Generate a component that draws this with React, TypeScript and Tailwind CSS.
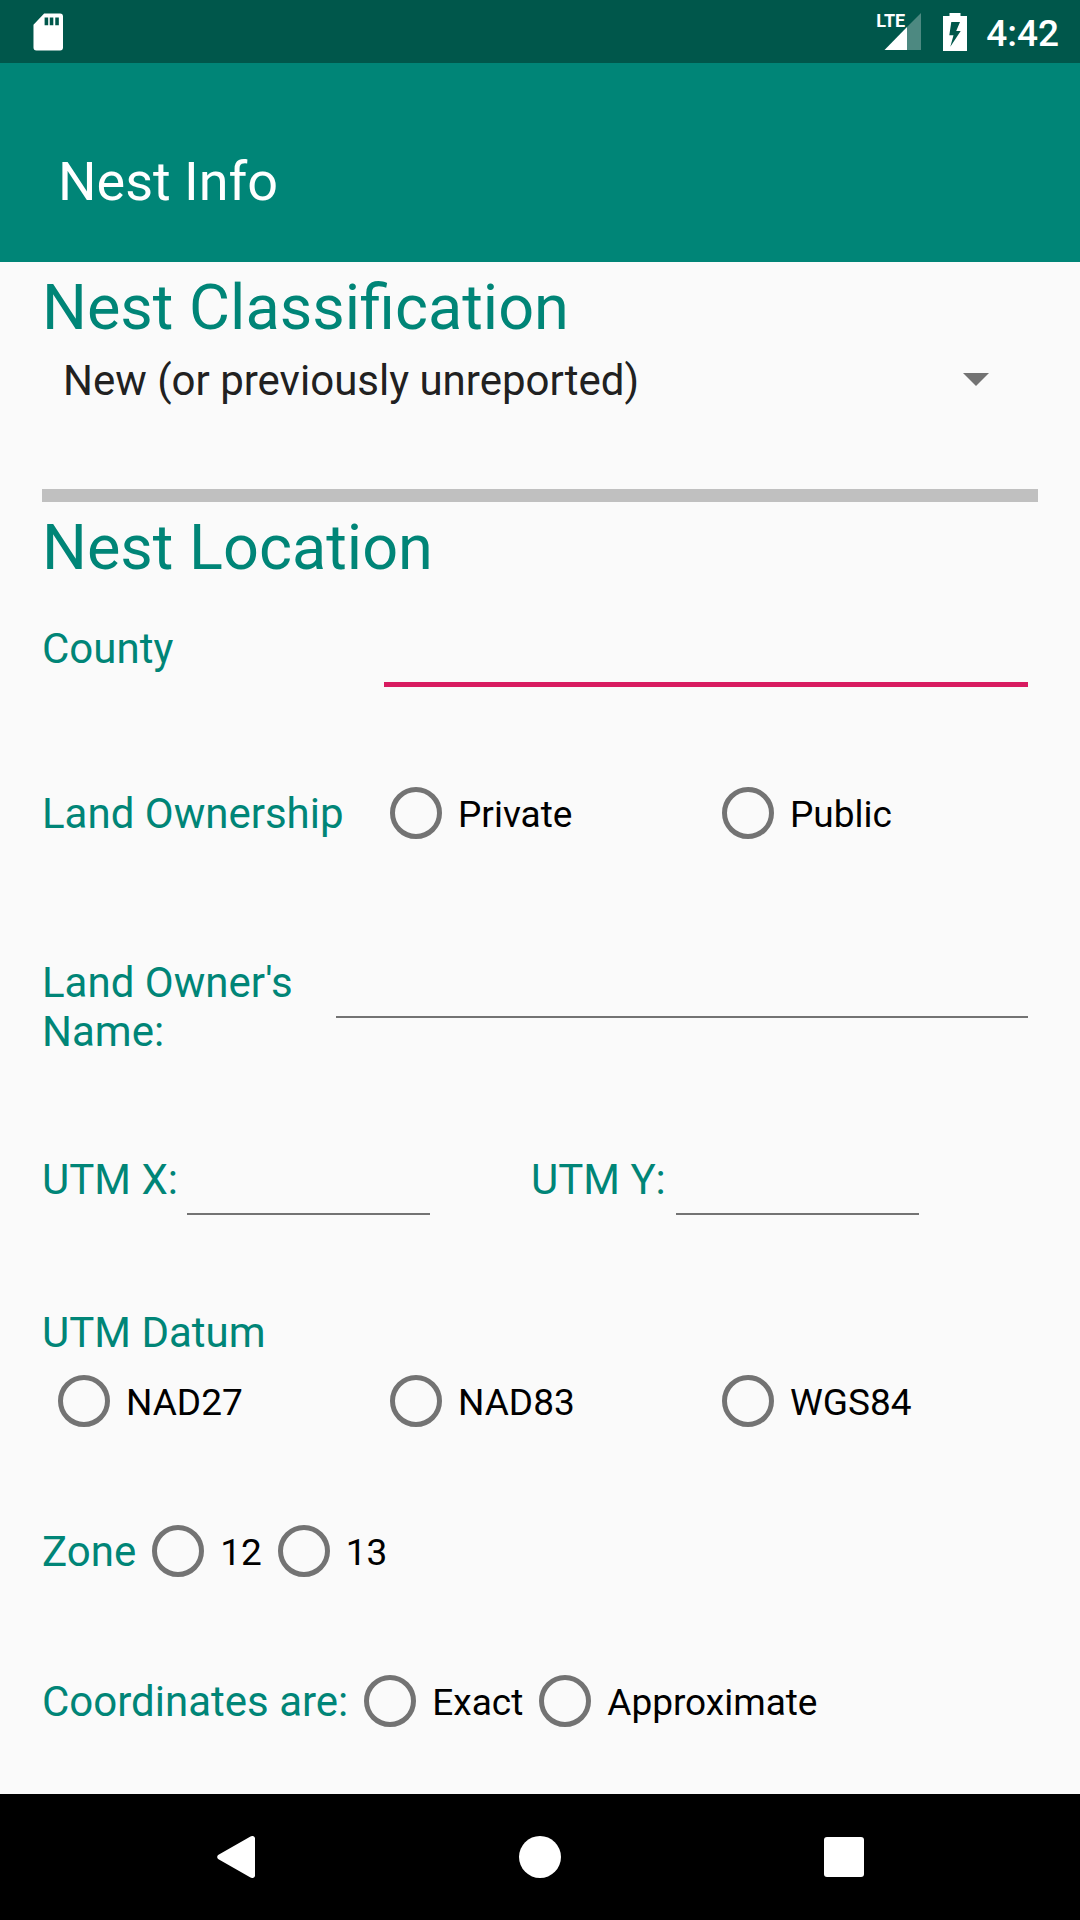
import React from 'react';

function Radio({ name, label, className = '' }: { name: string; label: string; className?: string }) {
  return (
    <label className={`flex items-center text-[37px] leading-[44px] text-black ${className}`}>
      <input
        type="radio"
        name={name}
        className="mx-4 h-[52px] w-[52px] shrink-0 appearance-none rounded-full border-[5px] border-[#737373] checked:bg-[#d81b60]"
      />
      <span className="pt-1">{label}</span>
    </label>
  );
}

const label = 'text-[42px] leading-[49px] text-[#008577]';
const heading = 'mt-[9px] text-[63px] leading-[74px] text-[#008577]';
const field = 'min-w-0 bg-transparent text-[42px] outline-none';
const line = 'h-[60px] border-b-2 border-[#737373]';

export default function App() {
  return (
    <div className="flex min-h-screen flex-col bg-[#fafafa] font-[Roboto,sans-serif]">
      <div className="flex h-[63px] items-center bg-[#00574b] px-[21px] text-white">
        <svg className="ml-3 h-[38px] w-[30px]" viewBox="0 0 31 38" fill="currentColor" aria-hidden="true">
          <path fillRule="evenodd" d="M11.5 0H28a3 3 0 0 1 3 3V35a3 3 0 0 1-3 3H3.500a3 3 0 0 1-3-3V11.500ZM12 4V12H15.700V4ZM17.300 4V12H21V4ZM23 4V12H26.700V4Z" />
        </svg>
        <div className="relative ml-auto">
          <svg className="h-[37px] w-[45px]" viewBox="0 0 45 37" aria-hidden="true">
            <path fill="#fff" fillOpacity=".3" d="M45 0V37H31V14Z" />
            <path fill="#fff" d="M31 14V37H8.500Z" />
          </svg>
          <span className="absolute left-0 top-0 text-[18px] font-bold leading-4">LTE</span>
        </div>
        <svg className="ml-[22px] h-[38px] w-[24px]" viewBox="0 0 24 38" fill="currentColor" aria-hidden="true">
          <path fillRule="evenodd" d="M6.500 0H17.500V3H24V38H0V3H6.500ZM8.300 9L6.300 22.300H10.500L7.300 33.700L17.700 18H13.200L17 9Z" />
        </svg>
        <span className="ml-[19px] pt-1 text-[37px] font-medium leading-[44px]">4:42</span>
      </div>
      <header className="flex h-[199px] items-center bg-[#008577] px-[58px] pt-[38px] text-white">
        <h1 className="text-[54px] leading-[62px]">Nest Info</h1>
      </header>
      <main className="flex flex-1 flex-col px-[42px]">
        <h2 className={heading}>Nest Classification</h2>
        <div className="relative mt-1 h-[63px]">
          <select aria-label="Nest Classification" className="h-full w-full appearance-none bg-transparent px-[21px] text-[42px] text-[#212121] outline-none">
            <option>New (or previously unreported)</option>
          </select>
          <svg className="pointer-events-none absolute right-[49px] top-6 h-[13px] w-[26px]" viewBox="0 0 26 13" aria-hidden="true">
            <path fill="#737373" d="M0 0H26L13 13Z" />
          </svg>
        </div>
        <hr className="mt-[77px] h-[13px] border-0 bg-[#c0c0c0]" />
        <h2 className={heading}>Nest Location</h2>
        <div className="mt-7 flex h-[74px] items-start">
          <label htmlFor="county" className={`w-[342px] pt-[11px] ${label}`}>County</label>
          <input id="county" className={`mr-[10px] h-full flex-1 border-b-[5px] border-[#d81b60] ${field}`} />
        </div>
        <div role="radiogroup" aria-labelledby="ownership" className="mt-[84px] flex h-[84px] items-center">
          <span id="ownership" className={`w-[332px] ${label}`}>Land Ownership</span>
          <Radio name="ownership" label="Private" className="w-[332px]" />
          <Radio name="ownership" label="Public" />
        </div>
        <div className="mt-[103px] flex">
          <label htmlFor="owner" className={`w-[294px] ${label}`}>Land Owner's Name:</label>
          <input id="owner" className={`mr-[10px] flex-1 ${line} ${field}`} />
        </div>
        <div className="mt-[99px] grid grid-cols-[489px_1fr]">
          <div className="flex">
            <label htmlFor="utm-x" className={`w-[145px] ${label}`}>UTM X:</label>
            <input id="utm-x" className={`w-[243px] ${line} ${field}`} />
          </div>
          <div className="flex">
            <label htmlFor="utm-y" className={`w-[145px] ${label}`}>UTM Y:</label>
            <input id="utm-y" className={`w-[243px] ${line} ${field}`} />
          </div>
        </div>
        <div role="radiogroup" aria-labelledby="datum" className="mt-[93px]">
          <div id="datum" className={label}>UTM Datum</div>
          <div className="mt-0.5 flex h-[84px] items-center">
            <Radio name="datum" label="NAD27" className="w-[332px]" />
            <Radio name="datum" label="NAD83" className="w-[332px]" />
            <Radio name="datum" label="WGS84" />
          </div>
        </div>
        <div role="radiogroup" aria-labelledby="zone" className="mt-[66px] flex h-[84px] items-center">
          <span id="zone" className={label}>Zone</span>
          <Radio name="zone" label="12" />
          <Radio name="zone" label="13" />
        </div>
        <div role="radiogroup" aria-labelledby="coordinates" className="mt-[66px] flex h-[84px] items-center">
          <span id="coordinates" className={label}>Coordinates are:</span>
          <Radio name="coordinates" label="Exact" />
          <Radio name="coordinates" label="Approximate" />
        </div>
      </main>
      <nav className="flex h-[126px] bg-black px-[84px] text-white">
        <button aria-label="Back" className="flex flex-1 items-center justify-center">
          <svg className="h-[42px] w-[38px]" viewBox="0 0 38 42" fill="currentColor">
            <path d="M33.500 .5C35.500-.7 38 .3 38 2.500V39.500C38 41.700 35.500 42.700 33.500 41.500L1.500 23.200C-.3 22 -.3 20 1.500 18.800Z" />
          </svg>
        </button>
        <button aria-label="Home" className="flex flex-1 items-center justify-center">
          <span className="h-[42px] w-[42px] rounded-full bg-white" />
        </button>
        <button aria-label="Recent apps" className="flex flex-1 items-center justify-center">
          <span className="h-10 w-10 rounded-[3px] bg-white" />
        </button>
      </nav>
    </div>
  );
}
